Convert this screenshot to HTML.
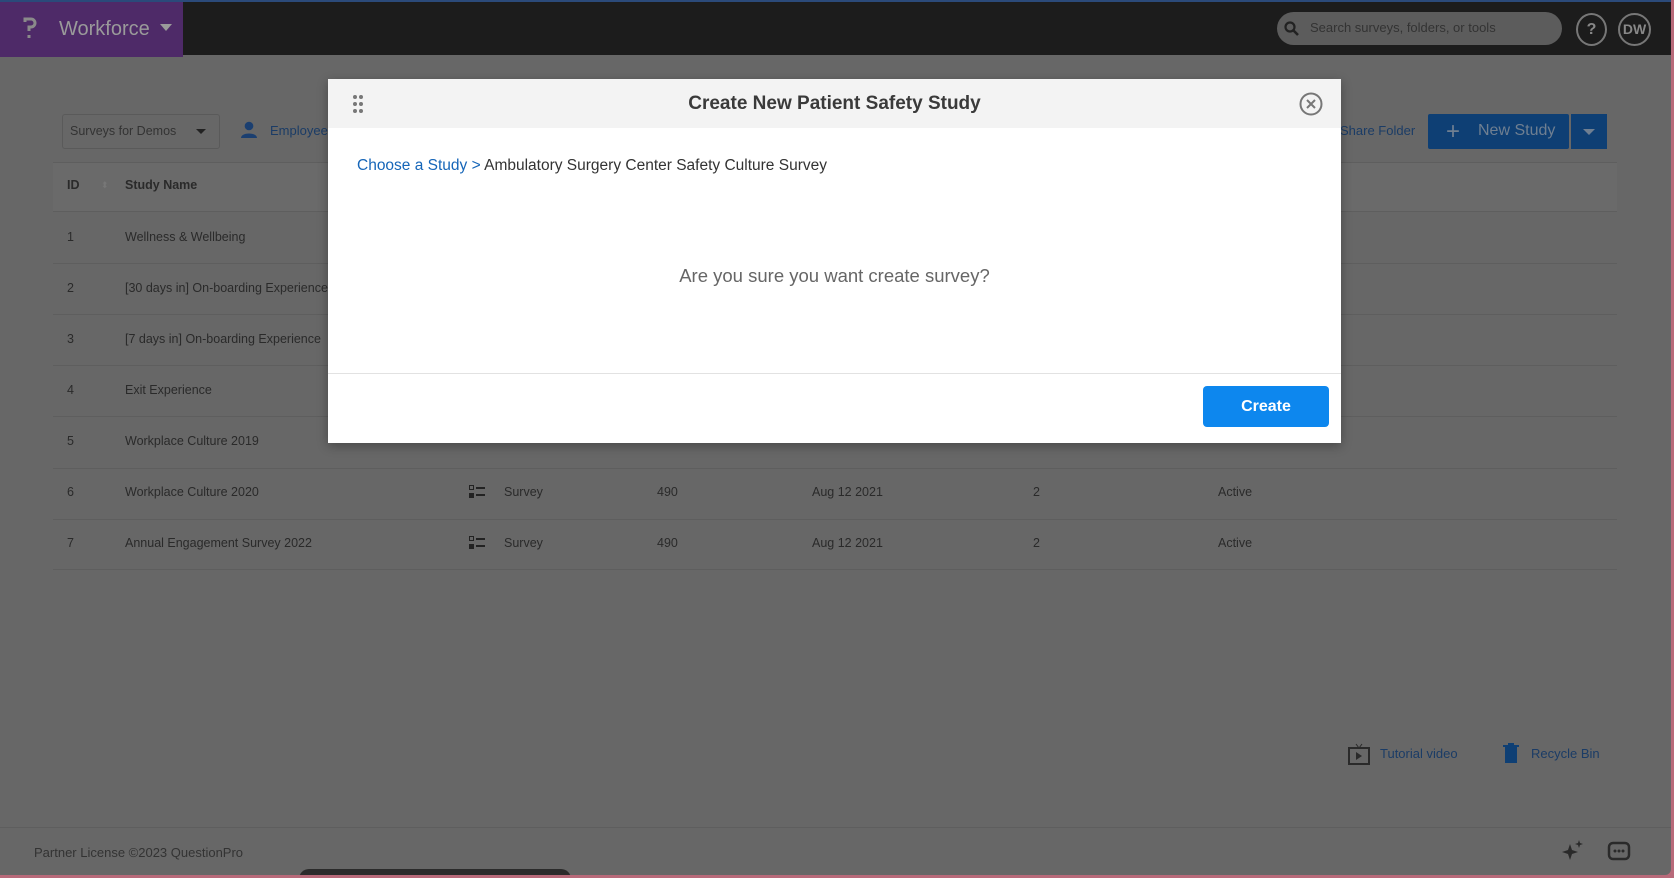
<!DOCTYPE html>
<html><head><meta charset="utf-8"><style>
*{margin:0;padding:0;box-sizing:border-box}
body{width:1674px;height:878px;overflow:hidden;background:#b86a7a;font-family:"Liberation Sans",sans-serif;position:relative}
.pg{position:absolute;left:0;top:0;width:1671px;height:875px;background:#676767;border-radius:0 0 6px 0;overflow:hidden}
.top{position:absolute;left:0;top:0;width:1671px;height:55px;background:#1c1c1c;border-top:2px solid #2b4a7a}
.brand{position:absolute;left:0;top:0;width:183px;height:55px;background:#4e2a68;color:#9a9a9a;font-size:20px}
.a{position:absolute;white-space:nowrap}
.t{color:#2a2a2a;font-size:12.5px}
.ln{position:absolute;left:53px;width:1564px;height:1px;background:#5e5e5e}
.modal{position:absolute;left:328px;top:79px;width:1013px;height:364px;background:#fff;box-shadow:0 3px 10px rgba(0,0,0,.3)}
</style></head><body>
<div class="pg">
<div class="top">
 <div class="brand"><svg class="a" style="left:22px;top:14px" width="16" height="24"><path d="M3 6V3h6a4 4 0 0 1 0 8H7v4M7 19v3" stroke="#8a8a8a" stroke-width="3" fill="none"/></svg><span class="a" style="left:59px;top:16px">Workforce</span><span class="a" style="left:160px;top:22px;border:6px solid transparent;border-top:7px solid #9a9a9a"></span></div>
 <div class="a" style="left:1277px;top:10px;width:285px;height:33px;border-radius:17px;background:#5c5c5c"></div>
 <svg class="a" style="left:1284px;top:19px" width="16" height="16"><circle cx="6" cy="6" r="4.5" stroke="#222" stroke-width="2.2" fill="none"/><path d="M9 9l5 5" stroke="#222" stroke-width="2.6"/></svg>
 <span class="a" style="left:1310px;top:18px;font-size:13px;color:#333">Search surveys, folders, or tools</span>
 <div class="a" style="left:1576px;top:11px;width:31px;height:33px;border:2px solid #777;border-radius:50%;color:#888;font-weight:bold;text-align:center;line-height:29px;font-size:16px">?</div>
 <div class="a" style="left:1618px;top:11px;width:33px;height:33px;border:2px solid #777;border-radius:50%;color:#888;font-weight:bold;text-align:center;line-height:29px;font-size:14px">DW</div>
</div>
<div class="a" style="left:62px;top:114px;width:158px;height:35px;border:1px solid #5a5a5a;border-radius:3px"></div>
<span class="a t" style="left:70px;top:124px;color:#333">Surveys for Demos</span>
<span class="a" style="left:196px;top:129px;border:5px solid transparent;border-top:5px solid #222"></span>
<svg class="a" style="left:240px;top:121px" width="18" height="18"><circle cx="9" cy="5" r="4.3" fill="#1b3f70"/><path d="M1 17c0-6 16-6 16 0z" fill="#1b3f70"/></svg>
<span class="a" style="left:270px;top:123px;color:#1b3c66;font-size:13px">Employee</span>
<span class="a" style="left:1340px;top:123px;color:#1b3c66;font-size:13px">Share Folder</span>
<div class="a" style="left:1428px;top:114px;width:141px;height:35px;background:#0e3f74;border-radius:2px"></div>
<span class="a" style="left:1446px;top:118px;color:#6f7f91;font-size:24px">+</span>
<span class="a" style="left:1478px;top:122px;color:#6f7f91;font-size:16px">New Study</span>
<div class="a" style="left:1571px;top:114px;width:36px;height:35px;background:#0e3f74"></div>
<span class="a" style="left:1583px;top:129px;border:6px solid transparent;border-top:6px solid #6f7f91"></span>
<div class="a" style="left:53px;top:162px;width:1564px;height:49px;background:#6a6a6a"></div>
<div class="ln" style="top:162px"></div>
<span class="a t" style="left:67px;top:178px;font-weight:bold">ID</span>
<span class="a" style="left:101px;top:180px;color:#777;font-size:9px">⬍</span>
<span class="a t" style="left:125px;top:178px;font-weight:bold">Study Name</span>
<div class="ln" style="top:211px"></div><div class="ln" style="top:263px"></div><div class="ln" style="top:314px"></div><div class="ln" style="top:365px"></div><div class="ln" style="top:416px"></div><div class="ln" style="top:468px"></div><div class="ln" style="top:519px"></div><div class="ln" style="top:569px"></div>
<span class="a t" style="left:67px;top:230px">1</span><span class="a t" style="left:125px;top:230px">Wellness &amp; Wellbeing</span>
<span class="a t" style="left:67px;top:281px">2</span><span class="a t" style="left:125px;top:281px">[30 days in] On-boarding Experience</span>
<span class="a t" style="left:67px;top:332px">3</span><span class="a t" style="left:125px;top:332px">[7 days in] On-boarding Experience</span>
<span class="a t" style="left:67px;top:383px">4</span><span class="a t" style="left:125px;top:383px">Exit Experience</span>
<span class="a t" style="left:67px;top:434px">5</span><span class="a t" style="left:125px;top:434px">Workplace Culture 2019</span>
<span class="a t" style="left:67px;top:485px">6</span><span class="a t" style="left:125px;top:485px">Workplace Culture 2020</span>
<span class="a t" style="left:504px;top:485px">Survey</span><span class="a t" style="left:657px;top:485px">490</span><span class="a t" style="left:812px;top:485px">Aug 12 2021</span><span class="a t" style="left:1033px;top:485px">2</span><span class="a t" style="left:1218px;top:485px">Active</span>
<svg class="a" style="left:469px;top:485px" width="18" height="14"><rect x="0.5" y="0.5" width="4" height="4" fill="none" stroke="#222"/><rect x="0" y="8" width="5" height="5" fill="#222"/><rect x="7" y="2" width="9" height="2" fill="#222"/><rect x="7" y="9" width="9" height="2" fill="#222"/></svg>
<span class="a t" style="left:67px;top:536px">7</span><span class="a t" style="left:125px;top:536px">Annual Engagement Survey 2022</span>
<span class="a t" style="left:504px;top:536px">Survey</span><span class="a t" style="left:657px;top:536px">490</span><span class="a t" style="left:812px;top:536px">Aug 12 2021</span><span class="a t" style="left:1033px;top:536px">2</span><span class="a t" style="left:1218px;top:536px">Active</span>
<svg class="a" style="left:469px;top:536px" width="18" height="14"><rect x="0.5" y="0.5" width="4" height="4" fill="none" stroke="#222"/><rect x="0" y="8" width="5" height="5" fill="#222"/><rect x="7" y="2" width="9" height="2" fill="#222"/><rect x="7" y="9" width="9" height="2" fill="#222"/></svg>
<svg class="a" style="left:1348px;top:743px" width="22" height="22"><rect x="1" y="5" width="20" height="16" fill="none" stroke="#2a2a2a" stroke-width="2"/><path d="M8 9l6 4-6 4z" fill="#2a2a2a"/><path d="M8 1l3 4 3-4" stroke="#2a2a2a" fill="none"/></svg>
<span class="a" style="left:1380px;top:746px;color:#1b3c66;font-size:13px">Tutorial video</span>
<svg class="a" style="left:1503px;top:743px" width="16" height="20"><rect x="2" y="4" width="12" height="16" fill="#0e3f74"/><rect x="0" y="2" width="16" height="2" fill="#0e3f74"/><rect x="5" y="0" width="6" height="2" fill="#0e3f74"/></svg>
<span class="a" style="left:1531px;top:746px;color:#1b3c66;font-size:13px">Recycle Bin</span>
<div class="a" style="left:0;top:827px;width:1671px;height:1px;background:#5e5e5e"></div>
<span class="a" style="left:34px;top:845px;color:#333;font-size:13px">Partner License ©2023 QuestionPro</span>
<svg class="a" style="left:1562px;top:840px" width="22" height="22"><path d="M8 4l2 6 6 2-6 2-2 6-2-6-6-2 6-2z" fill="#2a2a2a"/><path d="M17 0l1 3 3 1-3 1-1 3-1-3-3-1 3-1z" fill="#2a2a2a"/></svg>
<svg class="a" style="left:1606px;top:841px" width="26" height="22"><rect x="3" y="2" width="20" height="16" rx="4" fill="none" stroke="#2a2a2a" stroke-width="2.5"/><circle cx="9" cy="10" r="1.5" fill="#2a2a2a"/><circle cx="13" cy="10" r="1.5" fill="#2a2a2a"/><circle cx="17" cy="10" r="1.5" fill="#2a2a2a"/></svg>
<div class="a" style="left:299px;top:869px;width:272px;height:20px;background:#2b2b2b;border-radius:10px 10px 0 0"></div>
</div>
<div class="modal">
 <div class="a" style="left:0;top:0;width:1013px;height:49px;background:#f3f3f3"></div>
 <svg class="a" style="left:24px;top:15px" width="12" height="20"><g fill="#777"><circle cx="3" cy="3" r="2"/><circle cx="9" cy="3" r="2"/><circle cx="3" cy="10" r="2"/><circle cx="9" cy="10" r="2"/><circle cx="3" cy="17" r="2"/><circle cx="9" cy="17" r="2"/></g></svg>
 <div class="a" style="left:0;top:14px;width:1013px;text-align:center;font-size:19px;font-weight:bold;color:#3a3a3a">Create New Patient Safety Study</div>
 <svg class="a" style="left:970px;top:12px" width="26" height="26"><circle cx="13" cy="13" r="10.5" stroke="#777" stroke-width="2" fill="none"/><path d="M9 9l8 8M17 9l-8 8" stroke="#777" stroke-width="2"/></svg>
 <div class="a" style="left:29px;top:78px;font-size:15.5px;color:#333"><span style="color:#1565b8">Choose a Study &gt;</span> Ambulatory Surgery Center Safety Culture Survey</div>
 <div class="a" style="left:0;top:186px;width:1013px;text-align:center;font-size:18.5px;color:#666">Are you sure you want create survey?</div>
 <div class="a" style="left:0;top:294px;width:1013px;height:1px;background:#e2e2e2"></div>
 <div class="a" style="left:875px;top:307px;width:126px;height:41px;background:#0d87ee;border-radius:4px;color:#fff;font-size:16px;font-weight:bold;text-align:center;line-height:41px">Create</div>
</div>
</body></html>
